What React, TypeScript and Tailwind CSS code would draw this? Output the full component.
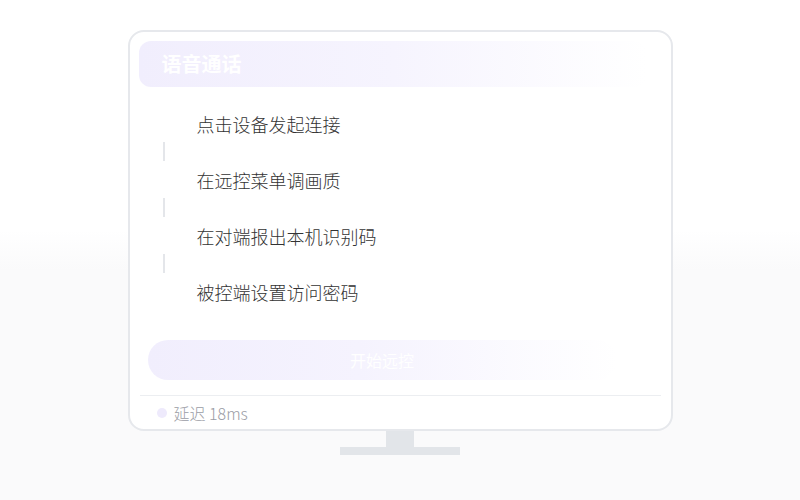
const steps = ['点击设备发起连接', '在远控菜单调画质', '在对端报出本机识别码', '被控端设置访问密码'];

export default function App() {
  return (
    <div
      className="w-[800px] h-[500px] flex flex-col items-center pt-[30px] bg-[linear-gradient(to_bottom,#ffffff_0%,#ffffff_46%,#fafafb_54%,#fafafb_100%)]"
      style={{ fontFamily: '"Noto Sans CJK SC", "Noto Sans", sans-serif' }}
    >
      <div className="w-[545px] h-[401px] rounded-[16px] border-2 border-[#e6e8ec] bg-white flex flex-col pt-[9px] px-[9px]">
        <div className="w-[508px] h-[46px] rounded-[12px] bg-[linear-gradient(to_right,#f1eefd_0%,#f6f4fe_50%,#ffffff_100%)] flex items-center pl-[23px]">
          <span className="text-[20px] font-bold text-white leading-none">语音通话</span>
        </div>

        <div className="mt-[25px] flex flex-col pl-[14px]">
          {steps.map((s, i) => (
            <div key={s} className="flex flex-col">
              <div className="flex items-center h-[24px] gap-[20px]">
                <span className="w-[24px] h-[24px] rounded-full bg-white" />
                <span className="text-[18px] font-light text-[#333333] leading-none">{s}</span>
              </div>
              {i < steps.length - 1 && (
                <div className="h-[32px] w-[24px] flex justify-center pt-[6px]">
                  <div className="w-[2px] h-[19px] bg-[#e4e6ea] -translate-x-[1px]" />
                </div>
              )}
            </div>
          ))}
        </div>

        <button className="mt-[36px] ml-[9px] w-[469px] h-[40px] rounded-full bg-[linear-gradient(to_right,#f1eefd_0%,#f5f3fe_45%,#ffffff_100%)] text-white text-[16px] flex items-center justify-center">
          开始远控
        </button>

        <div className="mt-[15px] h-[1px] bg-[#eceef1] mx-[1px]" />

        <div className="flex items-center h-[33px] pl-[18px] gap-[7px]">
          <span className="w-[10px] h-[10px] rounded-full bg-[#eeeafc]" />
          <span className="text-[16px] font-light text-[#9a9ca5]">延迟 18ms</span>
        </div>
      </div>

      <div className="w-[28px] h-[16px] bg-[#e2e5e9]" />
      <div className="w-[120px] h-[8px] bg-[#e2e5e9]" />
    </div>
  );
}
